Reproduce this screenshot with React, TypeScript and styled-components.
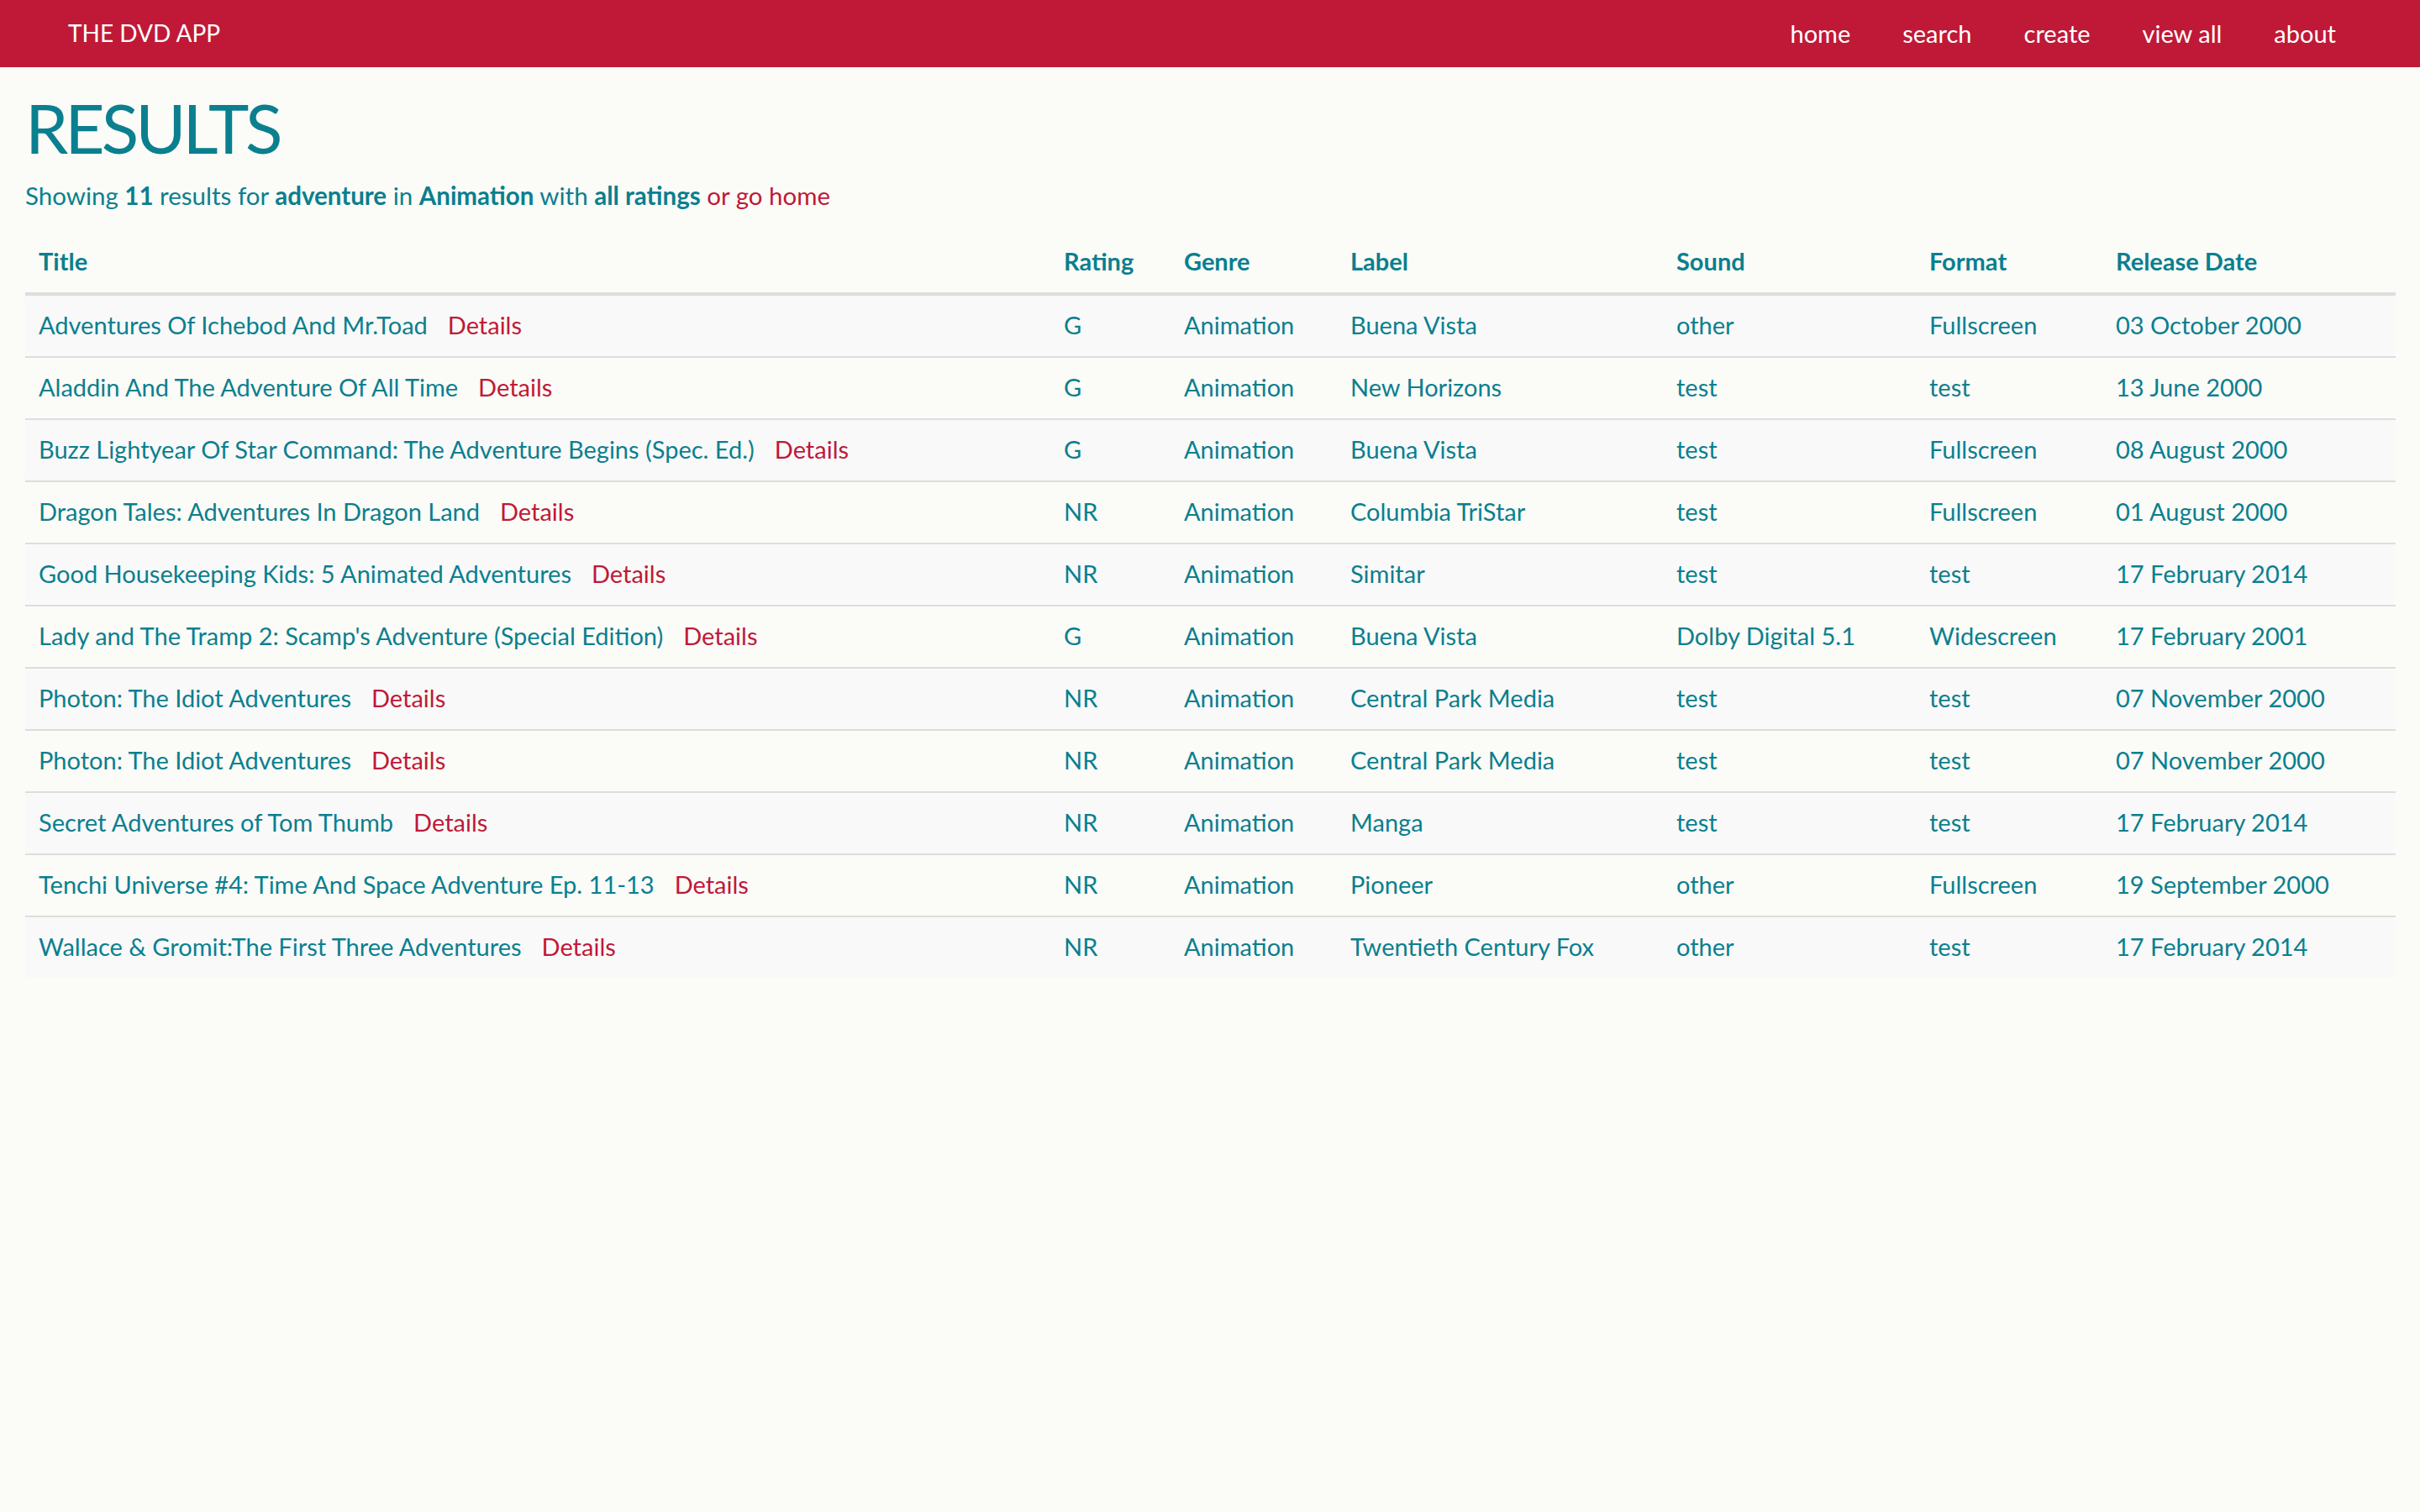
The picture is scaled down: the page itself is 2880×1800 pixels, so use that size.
import React from "react";
import styled, { createGlobalStyle } from "styled-components";

const TEAL = "#0a7f8f";
const CRIMSON = "#c01937";

const GlobalStyle = createGlobalStyle`
  html, body { margin: 0; padding: 0; }
  body {
    background: #fbfbf7;
    font-family: Lato, "Open Sans", sans-serif;
    font-size: 29px;
    color: ${TEAL};
  }
  * { box-sizing: border-box; }
`;

const NavBar = styled.header`
  height: 80px;
  background: ${CRIMSON};
  display: flex;
  align-items: center;
  justify-content: space-between;
  padding: 0 69px 2px 81px;
`;

const Brand = styled.a`
  color: #fff;
  font-size: 28px;
  text-decoration: none;
`;

const NavList = styled.nav`
  display: flex;
  align-items: center;
`;

const NavLink = styled.a`
  color: #fff;
  font-size: 29px;
  text-decoration: none;
  padding: 0 31px;
`;

const Main = styled.main`
  padding: 0 29px 0 30px;
`;

const Title = styled.h1`
  margin: 26px 0 0;
  font-size: 82px;
  letter-spacing: -4px;
  font-weight: 400;
  line-height: 1.1;
  color: ${TEAL};
`;

const Summary = styled.p`
  margin: 17px 0 23px;
  font-size: 29.5px;
  line-height: 40px;
  color: ${TEAL};
  b { font-weight: 700; }
`;

const Link = styled.a`
  color: ${CRIMSON};
  text-decoration: none;
`;

const Table = styled.table`
  width: 100%;
  table-layout: fixed;
  border-collapse: collapse;
  border-spacing: 0;
`;

const Th = styled.th`
  text-align: left;
  font-weight: 700;
  padding: 15px 16px 17px;
  line-height: 40px;
  border-bottom: 4px solid #dddddd;
  vertical-align: bottom;
  white-space: nowrap;
`;

const Row = styled.tr<{ $striped: boolean }>`
  background: ${(p) => (p.$striped ? "#f9f9f9" : "transparent")};
`;

const Td = styled.td`
  padding: 15px 16px 17px;
  line-height: 40px;
  white-space: nowrap;
  vertical-align: top;
  border-top: 2px solid #dddddd;
`;

const DetailsLink = styled(Link)`
  margin-left: 24px;
`;

type Dvd = {
  title: string;
  rating: string;
  label: string;
  sound: string;
  format: string;
  date: string;
};

const rows: Dvd[] = [
  { title: "Adventures Of Ichebod And Mr.Toad", rating: "G", label: "Buena Vista", sound: "other", format: "Fullscreen", date: "03 October 2000" },
  { title: "Aladdin And The Adventure Of All Time", rating: "G", label: "New Horizons", sound: "test", format: "test", date: "13 June 2000" },
  { title: "Buzz Lightyear Of Star Command: The Adventure Begins (Spec. Ed.)", rating: "G", label: "Buena Vista", sound: "test", format: "Fullscreen", date: "08 August 2000" },
  { title: "Dragon Tales: Adventures In Dragon Land", rating: "NR", label: "Columbia TriStar", sound: "test", format: "Fullscreen", date: "01 August 2000" },
  { title: "Good Housekeeping Kids: 5 Animated Adventures", rating: "NR", label: "Simitar", sound: "test", format: "test", date: "17 February 2014" },
  { title: "Lady and The Tramp 2: Scamp's Adventure (Special Edition)", rating: "G", label: "Buena Vista", sound: "Dolby Digital 5.1", format: "Widescreen", date: "17 February 2001" },
  { title: "Photon: The Idiot Adventures", rating: "NR", label: "Central Park Media", sound: "test", format: "test", date: "07 November 2000" },
  { title: "Photon: The Idiot Adventures", rating: "NR", label: "Central Park Media", sound: "test", format: "test", date: "07 November 2000" },
  { title: "Secret Adventures of Tom Thumb", rating: "NR", label: "Manga", sound: "test", format: "test", date: "17 February 2014" },
  { title: "Tenchi Universe #4: Time And Space Adventure Ep. 11-13", rating: "NR", label: "Pioneer", sound: "other", format: "Fullscreen", date: "19 September 2000" },
  { title: "Wallace & Gromit:The First Three Adventures", rating: "NR", label: "Twentieth Century Fox", sound: "other", format: "test", date: "17 February 2014" },
];

const columns = [
  { name: "Title", width: 1220 },
  { name: "Rating", width: 143 },
  { name: "Genre", width: 198 },
  { name: "Label", width: 388 },
  { name: "Sound", width: 301 },
  { name: "Format", width: 222 },
  { name: "Release Date", width: 349 },
];

export default function App() {
  return (
    <>
      <GlobalStyle />
      <NavBar>
        <Brand href="#">THE DVD APP</Brand>
        <NavList>
          {["home", "search", "create", "view all", "about"].map((l) => (
            <NavLink key={l} href="#">{l}</NavLink>
          ))}
        </NavList>
      </NavBar>
      <Main>
        <Title>RESULTS</Title>
        <Summary>
          Showing <b>11</b> results for <b>adventure</b> in <b>Animation</b> with{" "}
          <b>all ratings</b> <Link href="#">or go home</Link>
        </Summary>
        <Table>
          <colgroup>
            {columns.map((c) => (
              <col key={c.name} style={{ width: c.width }} />
            ))}
          </colgroup>
          <thead>
            <tr>
              {columns.map((c) => (
                <Th key={c.name}>{c.name}</Th>
              ))}
            </tr>
          </thead>
          <tbody>
            {rows.map((r, i) => (
              <Row key={i} $striped={i % 2 === 0}>
                <Td>
                  {r.title}
                  <DetailsLink href="#">Details</DetailsLink>
                </Td>
                <Td>{r.rating}</Td>
                <Td>Animation</Td>
                <Td>{r.label}</Td>
                <Td>{r.sound}</Td>
                <Td>{r.format}</Td>
                <Td>{r.date}</Td>
              </Row>
            ))}
          </tbody>
        </Table>
      </Main>
    </>
  );
}
